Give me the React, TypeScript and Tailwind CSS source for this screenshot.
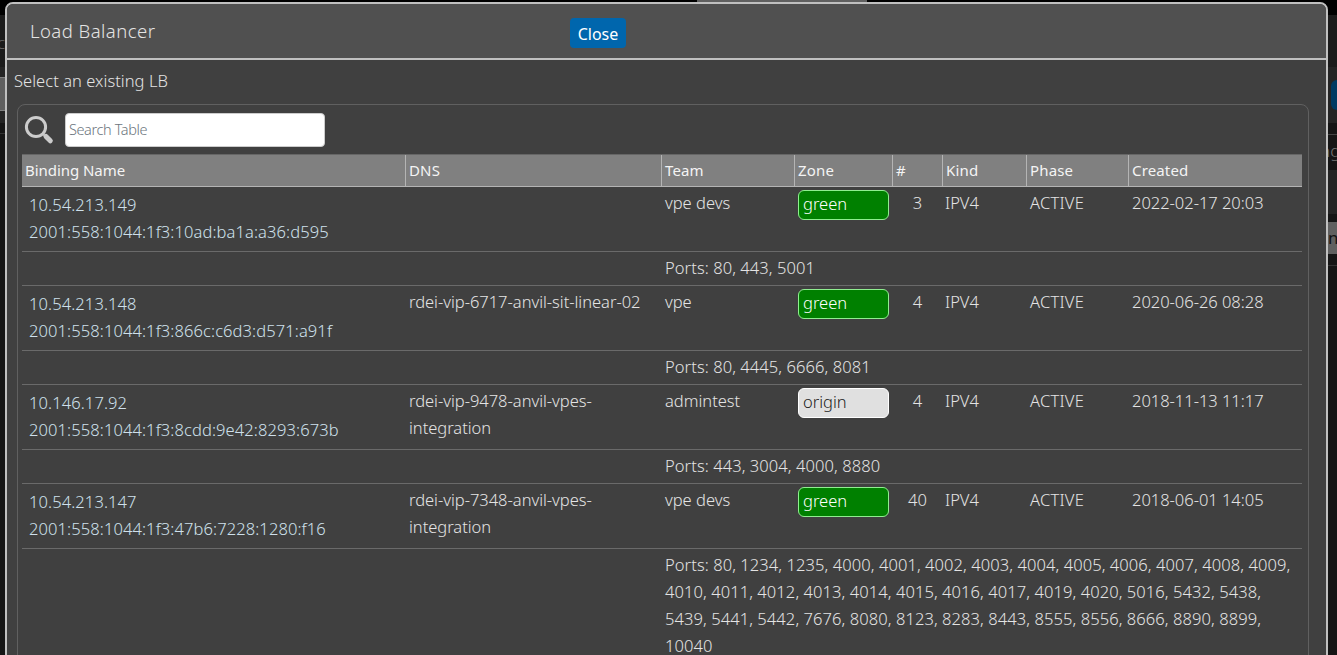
import React from "react";

type Row = { ip: string; ip6: string; dns: string[]; team: string; zone: "green" | "origin"; count: number; created: string; ports: string[] };

const rows: Row[] = [
  { ip: "10.54.213.149", ip6: "2001:558:1044:1f3:10ad:ba1a:a36:d595", dns: [], team: "vpe devs", zone: "green", count: 3, created: "2022-02-17 20:03", ports: ["Ports: 80, 443, 5001"] },
  { ip: "10.54.213.148", ip6: "2001:558:1044:1f3:866c:c6d3:d571:a91f", dns: ["rdei-vip-6717-anvil-sit-linear-02"], team: "vpe", zone: "green", count: 4, created: "2020-06-26 08:28", ports: ["Ports: 80, 4445, 6666, 8081"] },
  { ip: "10.146.17.92", ip6: "2001:558:1044:1f3:8cdd:9e42:8293:673b", dns: ["rdei-vip-9478-anvil-vpes-", "integration"], team: "admintest", zone: "origin", count: 4, created: "2018-11-13 11:17", ports: ["Ports: 443, 3004, 4000, 8880"] },
  {
    ip: "10.54.213.147", ip6: "2001:558:1044:1f3:47b6:7228:1280:f16", dns: ["rdei-vip-7348-anvil-vpes-", "integration"], team: "vpe devs", zone: "green", count: 40, created: "2018-06-01 14:05",
    ports: [
      "Ports: 80, 1234, 1235, 4000, 4001, 4002, 4003, 4004, 4005, 4006, 4007, 4008, 4009,",
      "4010, 4011, 4012, 4013, 4014, 4015, 4016, 4017, 4019, 4020, 5016, 5432, 5438,",
      "5439, 5441, 5442, 7676, 8080, 8123, 8283, 8443, 8555, 8556, 8666, 8890, 8899,",
      "10040",
    ],
  },
];

const grid = "grid grid-cols-[383px_256px_133px_98px_50px_84px_102px_174px]";
const heads = ["Binding Name", "DNS", "Team", "Zone", "#", "Kind", "Phase", "Created"];

const Lines = ({ lines }: { lines: string[] }) => (
  <>{lines.map((l) => <div key={l}>{l}</div>)}</>
);

function Zone({ zone }: { zone: Row["zone"] }) {
  const tone = zone === "green" ? "bg-[#008000] border-[#90ee90] text-white" : "bg-[#e0e0e0] border-white text-[#222]";
  return <div className={`mt-[3px] ml-1 h-[30px] w-[91px] rounded-md border pl-[4px] leading-[25px] ${tone}`}>{zone}</div>;
}

function LbRow({ row }: { row: Row }) {
  return (
    <>
      <div className={`${grid} h-[65px] border-b border-[#6a6a6a]`}>
        <div className="pt-[4px] pl-[7px] tracking-[0.1px] text-[#cfe0ec]"><div>{row.ip}</div><div>{row.ip6}</div></div>
        <div className="pt-[2px] pl-1 tracking-[-0.02px]"><Lines lines={row.dns} /></div>
        <div className="pt-[2px] pl-1">{row.team}</div>
        <Zone zone={row.zone} />
        <div className="pt-[2px] pl-px text-center">{row.count}</div>
        <div className="pt-[2px] pl-[3px]">IPV4</div>
        <div className="pt-[2px] pl-1 tracking-[0.25px]">ACTIVE</div>
        <div className="pt-[2px] pl-1 tracking-[-0.03px]">{row.created}</div>
      </div>
      <div className="border-b border-[#6a6a6a] pt-[2px] pb-1 pl-[643px] tracking-[0.08px]"><Lines lines={row.ports} /></div>
    </>
  );
}

function LeftPage() {
  return (
    <div className="flex w-[5px] shrink-0 flex-col overflow-hidden bg-[#151515]">
      <div className="h-[15px] shrink-0 bg-black" />
      <div className="flex h-[52px] shrink-0 justify-end overflow-hidden bg-[#1b1b1b] pt-[14px] text-[17px] text-[#666]">c</div>
      <div className="h-[10px] shrink-0 bg-[#242424]" />
      <div className="h-[34px] shrink-0 border-y border-[#808080] bg-[#5f5f5f]" />
      <div className="h-[12px] shrink-0 bg-[#242424]" />
      <div className="h-[11px] shrink-0 border-b border-[#333]" />
    </div>
  );
}

function RightPage() {
  return (
    <div className="flex w-[9px] shrink-0 flex-col overflow-hidden bg-[#151515] text-[17px] leading-[30px]">
      <div className="h-[15px] shrink-0 bg-black" />
      <div className="h-[52px] shrink-0 bg-[#1b1b1b]" />
      <div className="h-[56px] shrink-0 bg-[#242424] pt-[13px] pl-[3px]"><div className="h-[30px] rounded-l-md bg-[#003a63]" /></div>
      <div className="h-[12px] shrink-0 border-b border-[#444]" />
      <div className="h-[35px] shrink-0 overflow-hidden pt-px text-[#777]"><div className="-ml-[8px]">ng</div></div>
      <div className="h-[44px] shrink-0 bg-[#242424]" />
      <div className="h-[8px] shrink-0" />
      <div className="h-[32px] shrink-0 overflow-hidden bg-[#606060] pt-px font-normal text-[#111]">n</div>
      <div className="h-[12px] shrink-0 border-b border-[#333]" />
    </div>
  );
}

export default function App() {
  return (
    <div className="flex h-[655px] w-[1337px] overflow-hidden bg-black font-['Noto_Sans',sans-serif] text-[16.5px] leading-[27px] font-[330] text-[#e4e4e4]">
      <LeftPage />
      <div className="flex w-[1323px] shrink-0 flex-col">
        <div className="h-[2px] shrink-0 pl-[692px]"><div className="h-[2px] w-[170px] bg-[#606060]" /></div>
        <div className="h-[680px] shrink-0 rounded-t-lg border-2 border-[#c0c0c0] bg-[#404040]">
          <header className="flex h-[56px] items-start rounded-t-md border-b-2 border-[#c0c0c0] bg-[#505050]">
            <div className="w-[563px] pt-[13px] pl-[23px] text-[18.5px] tracking-[0.46px]">Load Balancer</div>
            <button className="mt-[14px] h-[30px] w-[56px] rounded-[4px] bg-[#0066ad] pt-[2px] text-[16px] leading-[28px] font-normal text-white">Close</button>
          </header>
          <div className="pt-[7px] pl-[7px] tracking-[0.05px]">Select an existing LB</div>
          <section className="mt-[10px] ml-[10px] h-[600px] w-[1292px] rounded-lg border border-[#606060] pl-[4px]">
            <div className="flex h-[49px] items-start pt-[8px]">
              <svg className="mt-[2px] ml-[2px] h-[30px] w-[31px]" viewBox="0 0 31 30" fill="none" stroke="#ccc">
                <circle cx="12" cy="12" r="9.6" strokeWidth="3" />
                <path d="M18.5 18.5l3 3" strokeWidth="2" />
                <path d="M22 21.5l4.3 4.3" strokeWidth="5" strokeLinecap="round" />
              </svg>
              <div className="ml-[10px] h-[34px] w-[260px] rounded-[4px] border border-[#ccc] bg-white pl-[3px] text-[14.5px] leading-[30px] tracking-[-0.4px] text-[#6c757d]">Search Table</div>
            </div>
            <div className="w-[1280px]">
              <div className={`${grid} h-[33px] border-t border-b border-t-[#666] border-b-[#b4b4b4] bg-[#808080] text-[15px] leading-[31px] font-[420] text-[#f4f4f4]`}>
                {heads.map((h, i) => (
                  <div key={h} className={i === 0 ? "pl-[3px] tracking-[-0.05px]" : "border-l border-[#b4b4b4] pl-[3px] tracking-[0.15px]"}>{h}</div>
                ))}
              </div>
              {rows.map((r) => <LbRow key={r.ip} row={r} />)}
            </div>
          </section>
        </div>
      </div>
      <RightPage />
    </div>
  );
}
